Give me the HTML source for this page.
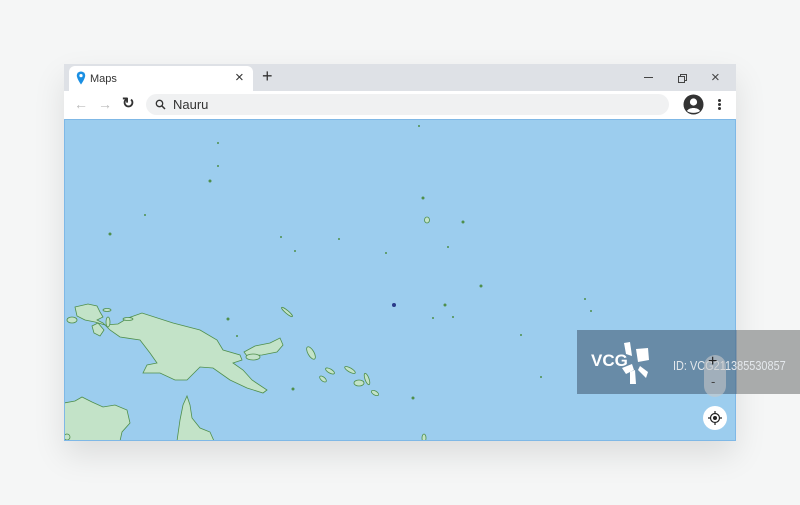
<!DOCTYPE html>
<html><head><meta charset="utf-8"><style>
*{margin:0;padding:0;box-sizing:border-box}
body{width:800px;height:505px;background:#f5f6f6;font-family:"Liberation Sans",sans-serif;position:relative;overflow:hidden}
.win{position:absolute;left:64px;top:64px;width:672px;height:377px;box-shadow:0 14px 30px rgba(0,0,0,.10)}
.tabbar{position:absolute;left:0;top:0;width:672px;height:27px;background:#dee1e6}
.tab{position:absolute;left:5px;top:2px;width:184px;height:25px;background:#fff;border-radius:6px 6px 0 0}
.tool{position:absolute;left:0;top:27px;width:672px;height:28px;background:#fff}
.url{position:absolute;left:82px;top:3px;width:523px;height:21px;background:#f0f1f2;border-radius:11px}
.map{position:absolute;left:0;top:55px;width:672px;height:322px;background:#9ccdee;border:1px solid #7fb8e6;overflow:hidden}
</style></head><body>
<div class="win">
<div class="tabbar">
<div class="tab">
<svg style="position:absolute;left:7px;top:5px" width="10" height="14" viewBox="0 0 10 14"><path d="M5 0.5C2.5 0.5 0.8 2.3 0.8 4.6 0.8 7.6 5 13.5 5 13.5S9.2 7.6 9.2 4.6C9.2 2.3 7.5 0.5 5 0.5Z" fill="#1a8fe3"/><circle cx="5" cy="4.6" r="1.6" fill="#fff"/></svg>
<span style="position:absolute;left:21px;top:7px;font-size:11px;color:#333">Maps</span>
<span style="position:absolute;left:166px;top:3px;font-size:15px;color:#333">×</span>
</div>
<span style="position:absolute;left:198px;top:2px;font-size:18px;color:#333">+</span>
<div style="position:absolute;left:580px;top:13px;width:9px;height:1px;background:#444"></div>
<div style="position:absolute;left:616px;top:10px;width:7px;height:7px;border:1px solid #444"></div>
<div style="position:absolute;left:614px;top:12px;width:7px;height:7px;border:1px solid #444;background:#dee1e6"></div>
<span style="position:absolute;left:647px;top:5px;font-size:15px;color:#444">×</span>
</div>
<div class="tool">
<span style="position:absolute;left:10px;top:5px;font-size:14px;color:#bbb">←</span>
<span style="position:absolute;left:34px;top:5px;font-size:14px;color:#bbb">→</span>
<span style="position:absolute;left:58px;top:3px;font-size:15px;color:#333;font-weight:bold">↻</span>
<div class="url">
<svg style="position:absolute;left:9px;top:5px" width="11" height="11" viewBox="0 0 11 11"><circle cx="4.5" cy="4.5" r="3.2" fill="none" stroke="#333" stroke-width="1.3"/><path d="M7 7L10 10" stroke="#333" stroke-width="1.5"/></svg>
<span style="position:absolute;left:27px;top:3px;font-size:13px;color:#333">Nauru</span>
</div>
<svg style="position:absolute;left:619px;top:3px" width="21" height="21" viewBox="0 0 21 21"><circle cx="10.5" cy="10.5" r="10" fill="#333"/><circle cx="10.5" cy="8" r="3.6" fill="#fff"/><path d="M4 17C6 13 15 13 17 17 14 19.5 7 19.5 4 17Z" fill="#fff"/></svg>
<div style="position:absolute;left:654px;top:8px;width:3px;height:3px;background:#333;border-radius:2px;box-shadow:0 4px 0 #333,0 8px 0 #333"></div>
</div>
<div class="map">
<svg width="672" height="322" viewBox="64 119 672 322" style="position:absolute;left:-1px;top:-1px">
<g fill="#c3e3c8" stroke="#4f8f4c" stroke-width="0.8">
<path d="M75 307L88 304 97 306 100 312 103 317 97 320 103 323 110 330 120 337 140 340 150 353 157 363 147 365 143 373 160 373 175 380 187 380 200 367 213 368 230 380 247 388 263 393 267 390 252 380 243 370 233 363 242 360 240 355 223 350 217 340 200 330 173 323 142 313 128 318 118 324 105 325 95 322 85 320 77 316Z"/>
<path d="M98 323L92 326 94 333 100 336 104 330Z"/>
<path d="M244 352L255 346 270 343 280 338 283 345 277 352 262 355 247 356Z"/>
<path d="M64 403L75 401 82 397 92 402 103 407 115 405 127 410 130 423 122 432 120 441 64 441Z"/>
<path d="M187 396L190 405 192 418 200 428 210 432 214 441 177 441 180 420 183 405Z"/>
<ellipse cx="253" cy="357" rx="7" ry="3"/>
<ellipse cx="311" cy="353" rx="3" ry="7" transform="rotate(-30 311 353)"/>
<ellipse cx="330" cy="371" rx="5" ry="2" transform="rotate(30 330 371)"/>
<ellipse cx="350" cy="370" rx="6" ry="2" transform="rotate(30 350 370)"/>
<ellipse cx="359" cy="383" rx="5" ry="3"/>
<ellipse cx="367" cy="379" rx="2" ry="6" transform="rotate(-20 367 379)"/>
<ellipse cx="375" cy="393" rx="4" ry="2" transform="rotate(30 375 393)"/>
<ellipse cx="323" cy="379" rx="4" ry="2" transform="rotate(40 323 379)"/>
<ellipse cx="107" cy="310" rx="4" ry="1.5"/>
<ellipse cx="72" cy="320" rx="5" ry="3"/>
<ellipse cx="108" cy="322" rx="2" ry="5"/>
<ellipse cx="128" cy="319" rx="5" ry="1.5"/>
<ellipse cx="67" cy="437" rx="3" ry="3"/>
<ellipse cx="287" cy="312" rx="7" ry="1.5" transform="rotate(40 287 312)"/>
<ellipse cx="427" cy="220" rx="2.5" ry="3"/>
<ellipse cx="424" cy="438" rx="2" ry="4"/>
</g>
<g fill="#4f8f4c">
<circle cx="419" cy="126" r="1"/><circle cx="218" cy="143" r="1"/><circle cx="218" cy="166" r="1"/><circle cx="210" cy="181" r="1.5"/><circle cx="145" cy="215" r="1"/><circle cx="110" cy="234" r="1.5"/><circle cx="281" cy="237" r="1"/><circle cx="339" cy="239" r="1"/><circle cx="295" cy="251" r="1"/><circle cx="386" cy="253" r="1"/><circle cx="423" cy="198" r="1.5"/><circle cx="463" cy="222" r="1.5"/><circle cx="448" cy="247" r="1"/><circle cx="481" cy="286" r="1.5"/><circle cx="445" cy="305" r="1.5"/><circle cx="433" cy="318" r="1"/><circle cx="453" cy="317" r="1"/><circle cx="585" cy="299" r="1"/><circle cx="591" cy="311" r="1"/><circle cx="521" cy="335" r="1"/><circle cx="541" cy="377" r="1"/><circle cx="413" cy="398" r="1.5"/><circle cx="237" cy="336" r="1"/><circle cx="228" cy="319" r="1.5"/><circle cx="293" cy="389" r="1.5"/>
</g>
<circle cx="394" cy="305" r="2" fill="#2a3a8a"/>
</svg>
</div>
</div>
<div style="position:absolute;left:577px;top:330px;width:160px;height:64px;background:rgba(70,95,120,.6)"></div>
<div style="position:absolute;left:737px;top:330px;width:63px;height:64px;background:#a9abab"></div>
<span style="position:absolute;left:591px;top:351px;font-size:17px;font-weight:bold;color:#fff">VCG</span>
<svg style="position:absolute;left:620px;top:340px" width="36" height="46" viewBox="0 0 36 46"><path d="M4 3L10 2 12 16 6 14Z M16 9L28 8 29 20 18 22Z M2 28L12 24 14 30 6 34Z M10 32L15 30 16 44 10 44Z M20 26L28 32 26 38 18 30Z" fill="#fff"/></svg>
<span style="position:absolute;left:673px;top:358px;font-size:13px;color:#e4e8ec;white-space:nowrap;transform:scaleX(0.84);transform-origin:0 0">ID: VCG211385530857</span>
<div style="position:absolute;left:704px;top:355px;width:22px;height:42px;border-radius:11px;background:rgba(200,200,200,.6)"></div>
<span style="position:absolute;left:708px;top:353px;font-size:16px;color:#222">+</span>
<span style="position:absolute;left:711px;top:374px;font-size:13px;color:#444">-</span>
<div style="position:absolute;left:703px;top:406px;width:24px;height:24px;border-radius:12px;background:#fff"></div>
<svg style="position:absolute;left:707px;top:410px" width="16" height="16" viewBox="0 0 16 16"><circle cx="8" cy="8" r="4.5" fill="none" stroke="#222" stroke-width="1.2"/><circle cx="8" cy="8" r="2" fill="#222"/><path d="M8 1V3.5M8 12.5V15M1 8H3.5M12.5 8H15" stroke="#222" stroke-width="1.2"/></svg>
</body></html>
